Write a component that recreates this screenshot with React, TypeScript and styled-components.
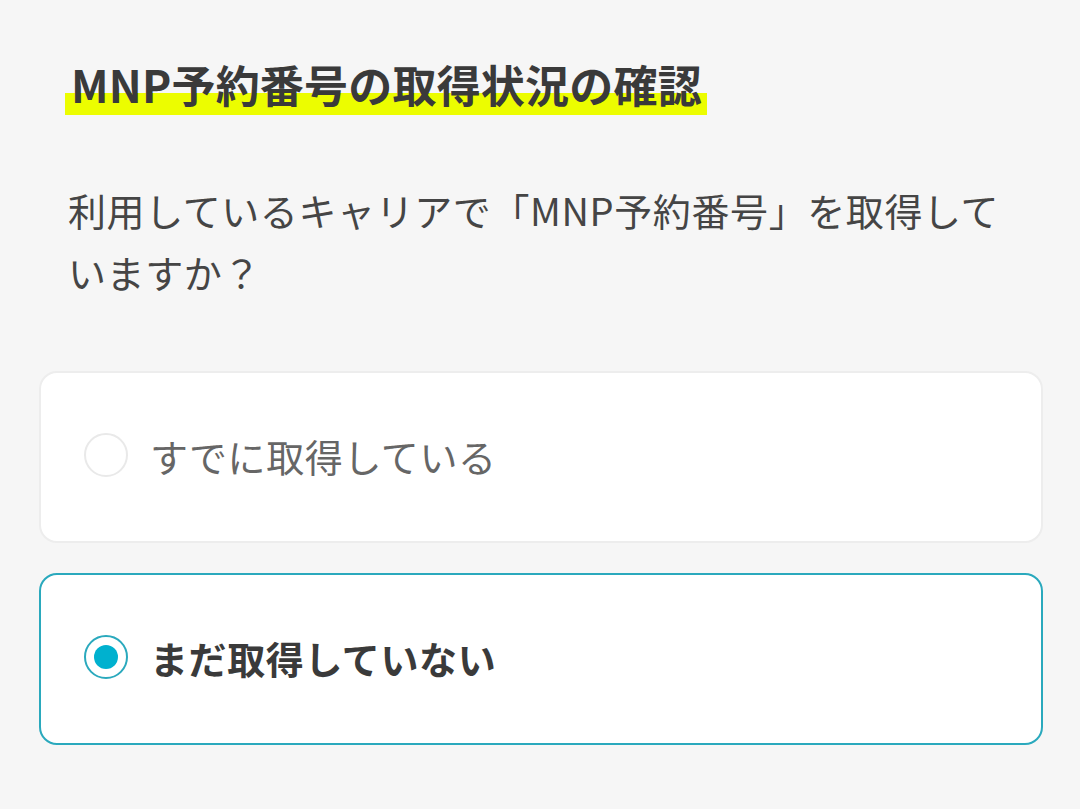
import React, { useState } from "react";
import styled, { createGlobalStyle } from "styled-components";

const GlobalStyle = createGlobalStyle`
  body {
    margin: 0;
    background: #f6f6f6;
    font-family: "Noto Sans CJK JP", "Noto Sans", sans-serif;
  }
`;

const Page = styled.div`
  padding: 58px 37px 40px 39px;
  display: flex;
  flex-direction: column;
`;

const Heading = styled.h2`
  margin: 0 0 64px 26px;
  font-size: 44px;
  line-height: 53px;
  font-weight: 700;
  letter-spacing: 0.2px;
  color: #3a3a3a;
`;

const Marker = styled.span`
  display: inline-block;
  padding: 0 5px 4px 6px;
  background: linear-gradient(transparent 61%, #ecfd00 61%);
`;

const Question = styled.p`
  margin: 0 0 68px 29px;
  width: 950px;
  font-size: 38px;
  line-height: 62px;
  letter-spacing: 0.6px;
  color: #454545;
`;

const Options = styled.div`
  display: flex;
  flex-direction: column;
  gap: 30px;
`;

const Card = styled.label<{ $active: boolean }>`
  display: flex;
  align-items: center;
  gap: 22px;
  height: 172px;
  box-sizing: border-box;
  padding: 0 43px 4px;
  background: #fff;
  border: 2px solid ${(p) => (p.$active ? "#2aa9bd" : "#ededed")};
  border-radius: 18px;
  cursor: pointer;
`;

const Radio = styled.span<{ $active: boolean }>`
  flex: none;
  width: 44px;
  height: 44px;
  box-sizing: border-box;
  border-radius: 50%;
  border: 2px solid ${(p) => (p.$active ? "#2aa9bd" : "#e9e9e9")};
  display: flex;
  align-items: center;
  justify-content: center;

  &::after {
    content: "";
    width: 24px;
    height: 24px;
    border-radius: 50%;
    background: ${(p) => (p.$active ? "#00b1cf" : "transparent")};
  }
`;

const Label = styled.span<{ $active: boolean }>`
  font-size: 38px;
  letter-spacing: 0.6px;
  font-weight: ${(p) => (p.$active ? 700 : 400)};
  color: ${(p) => (p.$active ? "#3a3a3a" : "#666")};
`;

const options = ["すでに取得している", "まだ取得していない"];

const App = (): JSX.Element => {
  const [selected, setSelected] = useState(1);

  return (
    <>
      <GlobalStyle />
      <Page>
        <Heading>
          <Marker>MNP予約番号の取得状況の確認</Marker>
        </Heading>
        <Question>
          利用しているキャリアで「MNP予約番号」を取得していますか？
        </Question>
        <Options>
          {options.map((text, i) => (
            <Card
              key={text}
              $active={selected === i}
              onClick={() => setSelected(i)}
            >
              <Radio $active={selected === i} />
              <Label $active={selected === i}>{text}</Label>
            </Card>
          ))}
        </Options>
      </Page>
    </>
  );
};

export default App;
